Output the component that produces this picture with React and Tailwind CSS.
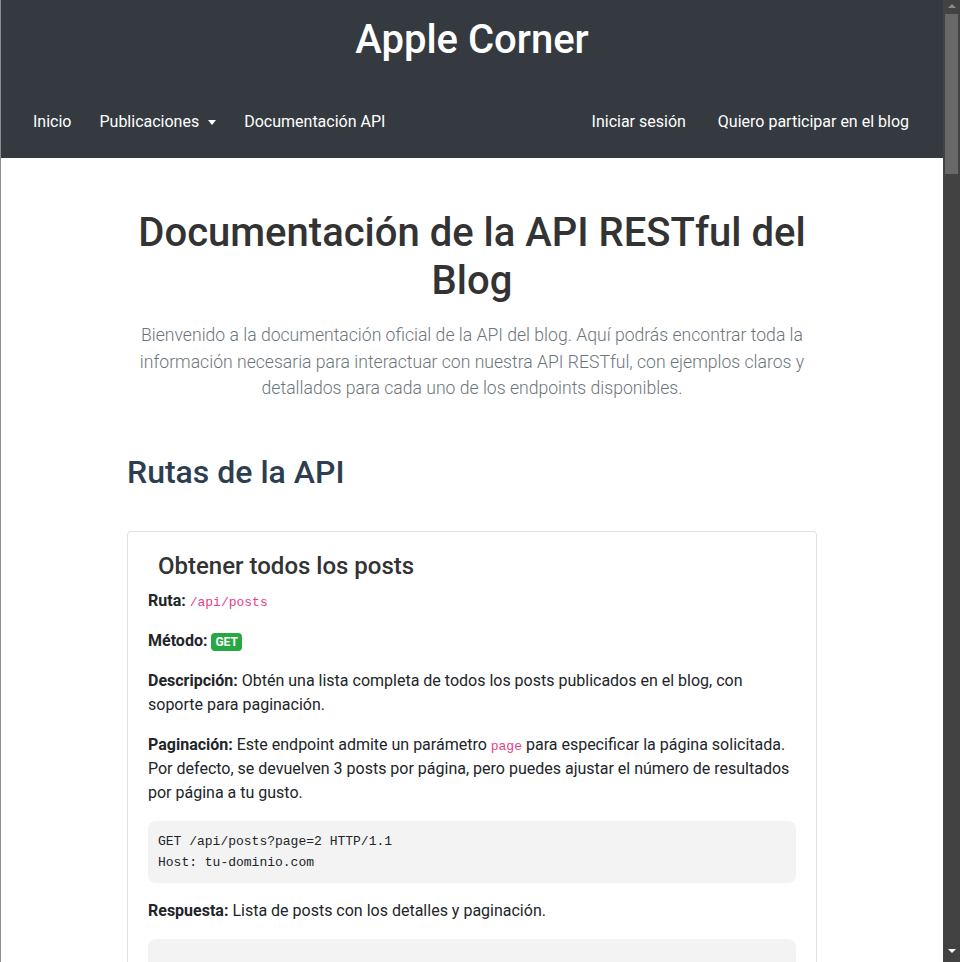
const navLeft = ["Inicio", "Publicaciones", "Documentación API"];
const navRight = ["Iniciar sesión", "Quiero participar en el blog"];

function Code({ children }) {
  return (
    <code className="font-['Liberation_Mono',monospace] text-[13px] leading-none text-[#e83e8c]">
      {children}
    </code>
  );
}

function Pre({ lines }) {
  return (
    <pre className="mb-4 rounded-lg bg-[#f3f3f3] p-[10px] font-['Liberation_Mono',monospace] text-[13px] leading-[21px] text-[#212529]">
      {lines.join("\n")}
    </pre>
  );
}

// fake window scrollbar, the reference shows one
function Scrollbar() {
  return (
    <div className="flex h-full w-[17px] shrink-0 flex-col items-center bg-[#424242] pt-[4px]">
      <span className="h-0 w-0 border-x-[4px] border-b-[4px] border-x-transparent border-b-[#8a8a8a]" />
      <div className="mt-[6px] h-[160px] w-[13px] bg-[#686868]" />
      <div className="flex-1" />
      <span className="mb-[9px] h-0 w-0 border-x-[4px] border-t-[4px] border-x-transparent border-t-white" />
    </div>
  );
}

export default function App() {
  return (
    <div className="flex h-screen overflow-hidden border-l border-[#8c8c8c] bg-white font-['Roboto',sans-serif] text-base leading-6 text-[#212529]">
      <div className="min-w-0 flex-1 overflow-hidden">
        {/* Header */}
        <header className="bg-[#343a40] text-white">
          <h1 className="pt-4 text-center text-[40px] leading-[48px] font-medium">
            Apple Corner
          </h1>
          <nav className="flex items-center justify-between pt-[46px] pb-6 pl-[18px] pr-[18px]">
            <ul className="flex">
              {navLeft.map((item) => (
                <li key={item}>
                  <a href="#" className="flex items-center px-[14px] text-white">
                    {item}
                    {item === "Publicaciones" && (
                      <span className="ml-[9px] inline-block h-0 w-0 border-x-[4.5px] border-t-[5px] border-x-transparent border-t-white" />
                    )}
                  </a>
                </li>
              ))}
            </ul>
            <ul className="flex">
              {navRight.map((item) => (
                <li key={item}>
                  <a href="#" className="px-4 text-white">
                    {item}
                  </a>
                </li>
              ))}
            </ul>
          </nav>
        </header>

        {/* Main */}
        <main className="mx-auto max-w-[720px] px-[15px] pt-[51px] pb-12">
          <h1 className="text-center text-[40px] leading-[48px] font-medium text-[#333]">
            Documentación de la API RESTful del Blog
          </h1>
          <p className="mt-[17px] text-center text-[17.6px] leading-[26.5px] font-light text-[#6c757d]">
            Bienvenido a la documentación oficial de la API del blog. Aquí
            podrás encontrar toda la información necesaria para interactuar con
            nuestra API RESTful, con ejemplos claros y detallados para cada uno
            de los endpoints disponibles.
          </p>

          <h2 className="mt-[51px] text-[32px] leading-[38.4px] font-medium text-[#2c3e50]">
            Rutas de la API
          </h2>

          <div className="mt-10 rounded border border-[#dfdfdf] px-5 pt-5">
            <h3 className="mb-2 ml-[10px] text-2xl leading-[28.8px] font-medium text-[#333]">
              Obtener todos los posts
            </h3>
            <p className="mb-4">
              <strong>Ruta:</strong> <Code>/api/posts</Code>
            </p>
            <p className="mb-4">
              <strong>Método:</strong>{" "}
              <span className="rounded bg-[#28a745] px-[4px] py-[2px] text-xs leading-none font-bold text-white">
                GET
              </span>
            </p>
            <p className="mb-4">
              <strong>Descripción:</strong> Obtén una lista completa de todos
              los posts publicados en el blog, con soporte para paginación.
            </p>
            <p className="mb-4">
              <strong>Paginación:</strong> Este endpoint admite un parámetro{" "}
              <Code>page</Code> para especificar la página solicitada. Por
              defecto, se devuelven 3 posts por página, pero puedes ajustar el
              número de resultados por página a tu gusto.
            </p>
            <Pre lines={["GET /api/posts?page=2 HTTP/1.1", "Host: tu-dominio.com"]} />
            <p className="mb-4">
              <strong>Respuesta:</strong> Lista de posts con los detalles y
              paginación.
            </p>
            <Pre
              lines={[
                "",
                "{",
                '  "posts": [',
                "    {",
                '      "id": 1,',
                '      "title": "Nuevo iPhone",',
                '      "author": "admin"',
                "    }",
                "  ],",
                '  "page": 2',
                "}",
              ]}
            />
          </div>
        </main>
      </div>
      <Scrollbar />
    </div>
  );
}
